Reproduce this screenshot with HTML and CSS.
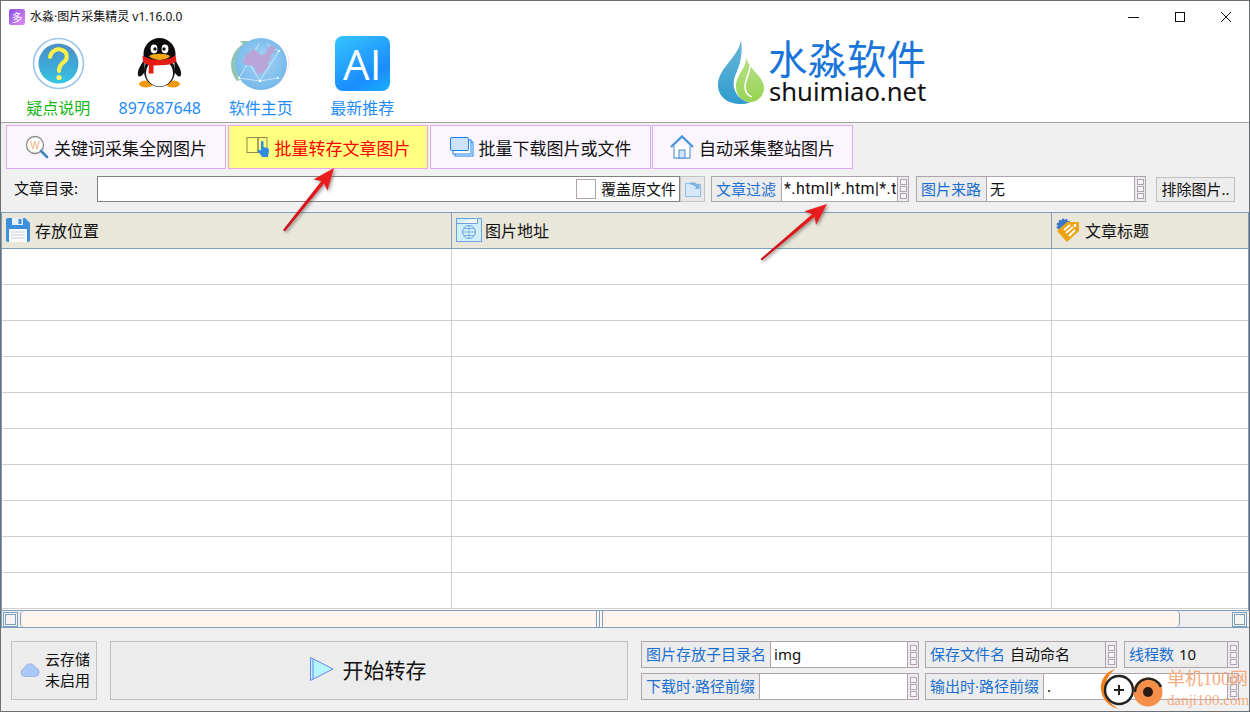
FILE: index.html
```html
<!DOCTYPE html>
<html lang="zh-CN">
<head>
<meta charset="utf-8">
<title>水淼·图片采集精灵</title>
<link rel="stylesheet" href="styles.css">
</head>
<body>
<div class="window">
  <div class="titlebar">
    <span class="app-icon">多</span>
    <span class="app-title">水淼·图片采集精灵 v1.16.0.0</span>
    <div class="win-btns">
      <svg class="win-btn" viewBox="0 0 46 32"><path d="M17 16.500h11" stroke="#111" fill="none"/></svg>
      <svg class="win-btn" viewBox="0 0 46 32"><rect x="18.500" y="11.500" width="9" height="9" stroke="#111" fill="none"/></svg>
      <svg class="win-btn" viewBox="0 0 46 32"><path d="M18 11l10 10M28 11l-10 10" stroke="#111" fill="none"/></svg>
    </div>
  </div>

  <header class="header">
    <div class="shortcut green">
      <svg class="sc-icon" viewBox="0 0 56 56">
        <defs><linearGradient id="orb" x1="0" y1="0" x2="0" y2="1"><stop offset="0" stop-color="#4a8fc4"/><stop offset=".55" stop-color="#3fa8d8"/><stop offset="1" stop-color="#35c6e2"/></linearGradient></defs>
        <circle cx="28.500" cy="27.500" r="25" fill="#fff" stroke="#9cc6ea" stroke-width="1.600"/>
        <circle cx="28.500" cy="27.500" r="20" fill="url(#orb)"/>
        <path d="M20 21c1-6 7-9 12-7 6 2 6 9 2 12-3 2-5 4-5 9" fill="none" stroke="#fff04a" stroke-width="4" stroke-linecap="round"/>
        <circle cx="29" cy="41.500" r="2.600" fill="#fff46a"/>
      </svg>
      <span>疑点说明</span>
    </div>
    <div class="shortcut">
      <svg class="sc-icon" viewBox="0 0 56 56">
        <g transform="translate(6 2)">
          <ellipse cx="8" cy="46" rx="7" ry="3.500" fill="#f29a12"/><ellipse cx="35" cy="46" rx="7" ry="3.500" fill="#f29a12"/>
          <path d="M7 20C3 27 -1 32 0 37c1 3 4 1 6-2zM36 20c4 7 8 12 7 17-1 3-4 1-6-2z" fill="#111"/>
          <ellipse cx="21.500" cy="16" rx="16" ry="16" fill="#0b0b0b"/>
          <ellipse cx="21.500" cy="33" rx="15.500" ry="16" fill="#111"/>
          <ellipse cx="21.500" cy="35" rx="13.500" ry="13.500" fill="#fff"/>
          <ellipse cx="16" cy="11" rx="3.400" ry="4.400" fill="#fff"/><ellipse cx="27" cy="11" rx="3.400" ry="4.400" fill="#fff"/>
          <circle cx="17" cy="11" r="1.700" fill="#111"/><circle cx="26" cy="11" r="1.700" fill="#111"/>
          <path d="M11 18c4-3 17-3 21 0-3 5-17 5-21 0z" fill="#f6a915"/>
          <path d="M4.500 17.500c10 6 24 6 33 0l1 6c-3 2-7 3-11 3.500l-12 .5v8h-5l.5-8.500C8 26 5.500 25 5 24z" fill="#e51d14"/>
        </g>
      </svg>
      <span>897687648</span>
    </div>
    <div class="shortcut">
      <svg class="sc-icon globe" viewBox="0 0 68 56">
        <defs><radialGradient id="gl" cx=".5" cy=".45" r=".6"><stop offset="0" stop-color="#a8d4f5"/><stop offset="1" stop-color="#6fb6ea"/></radialGradient></defs>
        <path d="M10 45C1 34 2 17 16 8l-3-3 10 0-5 8-1-3C7 18 6 33 13 44z" fill="#8fc4ae"/>
        <path d="M55 9c10 11 9 28-3 38l-6 3 8-8 1 2c8-9 9-23 1-34z" fill="#f0a8b8"/>
        <circle cx="34" cy="28" r="26" fill="url(#gl)"/>
        <path d="M12 42l21 3 18-3M12 42L32 8M33 45l19-30M33 45L18 20M52 15L40 8" stroke="#dcecf8" fill="none" stroke-width=".8"/>
        <path d="M19 19l7-6 5 3 3 3 4-1 3-6 4-3 4 3-2 5-4 3 2 3-4 3 0 5-4 4-4 4-4-2-1-5-4-3-5 0-4-3z" fill="#b9a6d9"/>
        <circle cx="51" cy="42" r="1" fill="#fff"/><circle cx="33" cy="45" r="1.200" fill="#fff"/><circle cx="12" cy="42" r="1" fill="#fff"/><circle cx="52" cy="15" r="1" fill="#fff"/>
      </svg>
      <span>软件主页</span>
    </div>
    <div class="shortcut">
      <div class="ai-tile">AI</div>
      <span>最新推荐</span>
    </div>
    <div class="logo">
      <svg class="logo-drop" viewBox="0 0 46 64">
        <defs>
          <linearGradient id="dropb" x1="0" y1="0" x2="0" y2="1"><stop offset="0" stop-color="#6cb8d8"/><stop offset="1" stop-color="#2f9ccd"/></linearGradient>
          <linearGradient id="dropg" x1="0" y1="0" x2="0" y2="1"><stop offset="0" stop-color="#b9e08a"/><stop offset="1" stop-color="#97d352"/></linearGradient>
        </defs>
        <path d="M23 0C20 18 0 28 0 45c0 12 10 19 23 19 3 0 6-.5 9-1.500C20 60 14 50 16 40c2-9 10-19 7-40z" fill="url(#dropb)"/>
        <path d="M28 17c1 11-10 17-10 30 0 8 6 14 13 15 8 1 15-6 15-14 0-12-15-18-18-31z" fill="url(#dropg)"/>
        <path d="M32 26c0 8-5 12-5 21 0 5 3 9 7 10" fill="none" stroke="#fff" stroke-width="1.600"/>
      </svg>
      <div class="logo-text">
        <div class="logo-cn">水淼软件</div>
        <div class="logo-en">shuimiao.net</div>
      </div>
    </div>
  </header>

  <nav class="tabs">
    <div class="tab">
      <svg class="tab-icon" viewBox="0 0 24 24"><circle cx="10" cy="10" r="8.500" fill="#fff" stroke="#8a8a8a" stroke-width="1.300"/><text x="10" y="13.500" text-anchor="middle" class="tab-w">W</text><path d="M16 16l6 6" stroke="#3f86c6" stroke-width="2.600" stroke-linecap="round"/></svg>
      <span>关键词采集全网图片</span>
    </div>
    <div class="tab active">
      <svg class="tab-icon" viewBox="0 0 24 24"><rect x="1" y="2.500" width="11" height="15" fill="none" stroke="#8a8a50"/><rect x="12" y="2.500" width="9" height="15" fill="none" stroke="#8a8a50"/><path d="M15 7c0-1.500 2.500-1.500 2.500 0v5l4 1c1.500.5 1.500 2 1.500 3l-1 6h-6l-4-6c0-1.500 1-2 2-1l1 1z" fill="#2f8be8"/></svg>
      <span>批量转存文章图片</span>
    </div>
    <div class="tab">
      <svg class="tab-icon" viewBox="0 0 24 24"><rect x="5" y="7" width="18" height="14" fill="#fff" stroke="#1a82f0"/><rect x="3" y="5" width="18" height="14" fill="#fff" stroke="#1a82f0"/><rect x=".5" y="2.500" width="18" height="13" rx="1.500" fill="#cfe2fb" stroke="#1a82f0"/></svg>
      <span>批量下载图片或文件</span>
    </div>
    <div class="tab">
      <svg class="tab-icon" viewBox="0 0 24 24"><path d="M4 11v12h16V11" fill="#fff" stroke="#6ea4d4" stroke-width="1.300"/><rect x="9" y="15" width="6" height="8" fill="#cfe4f8" stroke="#4a8fd0"/><path d="M1 12L12 1.500 23 12" fill="none" stroke="#4a96d8" stroke-width="2.400"/></svg>
      <span>自动采集整站图片</span>
    </div>
  </nav>

  <div class="toolbar">
    <span class="tool-label">文章目录:</span>
    <div class="path-input">
      <span class="checkbox"></span>
      <span class="check-label">覆盖原文件</span>
    </div>
    <div class="icon-btn">
      <svg viewBox="0 0 18 18" width="18" height="18"><path d="M1.500 3.500h6v1h9v12h-15z" fill="#d6e8f8" stroke="#8dbde8"/><path d="M4 4c4-3 8-2 10 1l1.500-1.500V9h-5l2-1.500C10 5 7 4 4 4z" fill="#7fb2e4"/></svg>
    </div>
    <div class="field f-filter">
      <span class="f-label">文章过滤</span>
      <div class="f-value white filter-value">*.html|*.htm|*.txt</div>
      <span class="spin"><i></i><i></i><i></i></span>
    </div>
    <div class="field f-source">
      <span class="f-label">图片来路</span>
      <div class="f-value white">无</div>
      <span class="spin"><i></i><i></i><i></i></span>
    </div>
    <div class="plain-btn">排除图片..</div>
  </div>

  <div class="table">
    <div class="t-head">
      <div class="th">
        <svg class="th-icon" viewBox="0 0 24 24"><path d="M0 2a2 2 0 0 1 2-2h17l5 5v17a2 2 0 0 1-2 2H2a2 2 0 0 1-2-2z" fill="#3b8fdd"/><rect x="6" y="0" width="11" height="7" fill="#e8f1fa"/><rect x="12.500" y="1" width="3" height="5" fill="#3b8fdd"/><rect x="3" y="11" width="18" height="13" fill="#fbfbfb"/><path d="M5 14h14M5 17h14M5 20h14" stroke="#c9ced4"/></svg>
        <span>存放位置</span>
      </div>
      <div class="th th-url">
        <svg class="th-icon wide" viewBox="0 0 26 24"><rect x=".5" y=".5" width="25" height="23" fill="#cdf0fa" stroke="#6f9fe0"/><path d="M.5 5.500h21V.5" fill="#f6f6ee" stroke="#6f9fe0"/><circle cx="13" cy="14" r="6.500" fill="none" stroke="#6f9fe0"/><path d="M6.500 14h13M13 7.500v13M8 10.500h10M8 17.500h10" stroke="#6f9fe0" fill="none" stroke-width=".8"/></svg>
        <span>图片地址</span>
      </div>
      <div class="th">
        <svg class="th-icon" viewBox="0 0 24 24"><circle cx="8" cy="8" r="6.500" fill="#3a78c8" stroke="#3a78c8" stroke-width="2" stroke-dasharray="2 1.500"/><path d="M11 4h11a1 1 0 0 1 1 1v8L11 24 1 13z" fill="#eca414"/><path d="M8 12l6-5M10 15l7-6M13 18l6-6" stroke="#fff" stroke-width="1.800"/><circle cx="19" cy="7.500" r="1.400" fill="#fff"/></svg>
        <span>文章标题</span>
      </div>
    </div>
    <div class="t-body">
      <div class="tr"><div></div><div></div><div></div></div>
      <div class="tr"><div></div><div></div><div></div></div>
      <div class="tr"><div></div><div></div><div></div></div>
      <div class="tr"><div></div><div></div><div></div></div>
      <div class="tr"><div></div><div></div><div></div></div>
      <div class="tr"><div></div><div></div><div></div></div>
      <div class="tr"><div></div><div></div><div></div></div>
      <div class="tr"><div></div><div></div><div></div></div>
      <div class="tr"><div></div><div></div><div></div></div>
      <div class="tr"><div></div><div></div><div></div></div>
    </div>
    <div class="hscroll">
      <span class="sb-btn"></span>
      <div class="sb-thumb"><span class="sb-grip"></span></div>
      <span class="sb-btn end"></span>
    </div>
  </div>

  <footer class="bottom">
    <div class="cloud-btn">
      <svg class="cloud" viewBox="0 0 20 14"><path d="M4.500 13.500a4 4 0 0 1-.5-7.800C5 2 8 .5 11 1c2.500.5 4 2 4.500 4a4.300 4.300 0 0 1 0 8.500z" fill="#a9c8f8" stroke="#9db4dc"/></svg>
      <div class="cloud-text"><span>云存储</span><span>未启用</span></div>
    </div>
    <div class="start-btn">
      <svg class="play" viewBox="0 0 24 24"><path d="M.5.500L23 12 .5 23.500z" fill="#b4f6fc" stroke="#6f86ee"/><path d="M3 2v20" stroke="#6f86ee"/></svg>
      <span>开始转存</span>
    </div>
    <div class="fields">
      <div class="field">
        <span class="f-label">图片存放子目录名</span>
        <div class="f-value white">img</div>
        <span class="spin"><i></i><i></i><i></i></span>
      </div>
      <div class="field gray">
        <span class="f-label bare">保存文件名</span>
        <div class="f-value">自动命名</div>
        <span class="spin"><i></i><i></i><i></i></span>
      </div>
      <div class="field gray threads">
        <span class="f-label bare">线程数</span>
        <div class="f-value">10</div>
        <span class="spin"><i></i><i></i><i></i></span>
      </div>
      <div class="field">
        <span class="f-label">下载时·路径前缀</span>
        <div class="f-value white"></div>
        <span class="spin"><i></i><i></i><i></i></span>
      </div>
      <div class="field span2">
        <span class="f-label">输出时·路径前缀</span>
        <div class="f-value white">.</div>
        <span class="spin"><i></i><i></i><i></i></span>
      </div>
    </div>
  </footer>

  <svg class="arrows" viewBox="0 0 1250 712">
    <defs>
      <linearGradient id="ar" x1="0" y1="0" x2="1" y2="0"><stop offset="0" stop-color="#c8141c"/><stop offset="1" stop-color="#f01c20"/></linearGradient>
      <filter id="sh" x="-30%" y="-30%" width="160%" height="160%"><feDropShadow dx="1.500" dy="1.500" stdDeviation="1.500" flood-color="#555" flood-opacity=".6"/></filter>
    </defs>
    <polygon points="334,168 327.400,190.800 324.200,183.500 285,231.500 283,230 321.400,181 313.400,179.600" fill="url(#ar)" filter="url(#sh)"/>
    <polygon points="827,204 816,225 814.500,217 762,260.500 760.500,259 812.100,214.200 804.400,211.300" fill="url(#ar)" filter="url(#sh)"/>
  </svg>

  <div class="watermark">
    <svg class="wm-icon" viewBox="0 0 64 44">
      <path d="M15 2C5 5 0 14 1 23c1 9 8 17 18 19 -8-4-14-10-14-19S9 7 15 2z" fill="#f07f1c"/>
      <circle cx="19" cy="23" r="14" fill="#fff" stroke="#222" stroke-width="2.400"/>
      <path d="M14 23h10M19 18v10" stroke="#222" stroke-width="2"/>
      <circle cx="48" cy="25" r="14.500" fill="#f58e48"/>
      <path d="M35 25a13.500 13.500 0 0 1 26-5" fill="none" stroke="#222" stroke-width="2.400"/>
      <circle cx="48" cy="25" r="5" fill="#2a1a12"/>
    </svg>
    <div class="wm-text">
      <div class="wm-cn">单机100网</div>
      <div class="wm-en">danji100.com</div>
    </div>
  </div>
</div>
</body>
</html>
```
FILE: styles.css
```css
* { box-sizing: border-box; }
html, body { margin: 0; padding: 0; height: 100%; overflow: hidden; }
body {
  font-family: "Noto Sans", "Noto Sans CJK SC", sans-serif;
  font-size: 15px;
  color: #111;
  background: #f0f0f0;
}
.window {
  position: relative;
  width: 1250px;
  height: 712px;
  border: 1px solid #6c7073;
  display: flex;
  flex-direction: column;
  background: #f0f0f0;
  overflow: hidden;
}

/* title bar */
.titlebar {
  height: 31px;
  flex: none;
  display: flex;
  align-items: center;
  background: #fff;
  padding-left: 8px;
}
.app-icon {
  width: 16px;
  height: 16px;
  border-radius: 2px;
  background: linear-gradient(135deg, #8a4fe8, #e08af0);
  color: #fff;
  font-size: 11px;
  line-height: 16px;
  text-align: center;
  font-family: "Noto Sans CJK SC", sans-serif;
}
.app-title { margin-left: 5px; font-size: 12px; line-height: 16px; }
.win-btns { margin-left: auto; display: flex; }
.win-btn { width: 46px; height: 32px; display: block; }

/* header */
.header {
  height: 91px;
  flex: none;
  display: flex;
  background: #fff;
  padding-left: 6px;
  border-bottom: 1px solid #a0a0a0;
}
.shortcut {
  width: 101.500px;
  height: 90px;
  display: flex;
  flex-direction: column;
  align-items: center;
  padding-top: 4px;
  font-size: 16px;
  line-height: 22px;
  color: #1f8cfa;
}
.shortcut:nth-child(1) { width: 102.500px; }
.shortcut:nth-child(2) { width: 100.500px; }
.shortcut.green { color: #12b512; }
.shortcut span { margin-top: auto; margin-bottom: 3px; white-space: nowrap; }
.sc-icon { width: 56px; height: 56px; display: block; }
.sc-icon.globe { width: 68px; }
.ai-tile {
  width: 55px;
  height: 55px;
  border-radius: 8px;
  background: linear-gradient(150deg, #35c4fc 0%, #1a8cff 70%, #18b0f8 100%);
  color: #fff;
  font-family: "Open Sans", sans-serif;
  font-weight: 400;
  font-size: 42px;
  line-height: 55px;
  text-align: center;
}
.logo {
  margin-left: 305px;
  display: flex;
  align-items: flex-start;
  padding-top: 8px;
}
.logo-drop { width: 46px; height: 64px; display: block; }
.logo-text { margin-left: 5px; margin-top: -7px; }
.logo-cn {
  margin-left: -1px;
  font-size: 39.500px;
  line-height: 47px;
  color: #1a75d8;
  font-family: "Noto Sans CJK SC", sans-serif;
  white-space: nowrap;
}
.logo-en {
  font-size: 25.600px;
  line-height: 24px;
  color: #111;
  white-space: nowrap;
}

/* tabs */
.tabs {
  flex: none;
  display: flex;
  height: 47px;
  padding: 2px 0 1px 5px;
  gap: 2px;
}
.tab {
  height: 44px;
  width: 220px;
  display: flex;
  align-items: center;
  justify-content: center;
  gap: 5px;
  background: #fbf5ff;
  border: 1px solid #dcaaf0;
  font-size: 17px;
}
.tab:nth-child(2) { width: 200px; }
.tab:nth-child(3) { width: 221px; margin-right: -1px; }
.tab:nth-child(4) { width: 201px; }
.tab.active { background: #ffff80; color: #f00; border-color: #e8a8e8; }
.tab-icon { width: 24px; height: 24px; flex: none; }
.tab-w { font-size: 10px; fill: #f2b070; font-family: "Liberation Sans", sans-serif; }

/* toolbar */
.toolbar {
  flex: none;
  height: 42px;
  display: flex;
  padding: 6px 0 0 13px;
  align-items: flex-start;
}
.tool-label { width: 83px; line-height: 25px; white-space: nowrap; }
.path-input {
  width: 583px;
  height: 26px;
  background: #fff;
  border: 1px solid #808080;
  display: flex;
  align-items: center;
  justify-content: flex-end;
  padding-right: 3px;
}
.checkbox {
  width: 20px;
  height: 20px;
  border: 1px solid #b0a3b0;
  background: #fff;
}
.check-label { margin: 0 0 2px 5px; white-space: nowrap; }
.icon-btn {
  width: 25px;
  height: 26px;
  background: #e8e8e8;
  border: 1px solid #c4c4c4;
  display: flex;
  align-items: center;
  justify-content: center;
}
.field {
  height: 26px;
  display: flex;
  align-items: stretch;
  border: 1px solid #b0a3b0;
  background: #fff;
  min-width: 0;
}
.f-filter { width: 198px; margin-left: 6px; }
.f-source { width: 230px; margin-left: 7px; }
.f-label {
  flex: none;
  padding: 0 4px;
  color: #1a6fd0;
  background: #ececec;
  border-right: 1px solid #b0a3b0;
  line-height: 24px;
  white-space: nowrap;
}
.toolbar .f-label { padding-right: 5px; }
.f-label.bare { border-right: 0; }
.f-value {
  flex: 1;
  min-width: 0;
  padding-left: 3px;
  line-height: 24px;
  white-space: nowrap;
  overflow: hidden;
}
.f-value.white { background: #fff; }
.filter-value { font-family: Roboto, sans-serif; font-size: 16px; letter-spacing: .4px; padding-left: 2px; }
.spin {
  flex: none;
  width: 11px;
  display: flex;
  flex-direction: column;
  align-items: center;
  justify-content: center;
  gap: 1px;
  background: #ececec;
  border-left: 1px solid #b0a3b0;
}
.spin i {
  display: block;
  width: 7px;
  height: 6px;
  background: #f4f4f4;
  border: 1px solid #b0a3b0;
}
.field.gray { background: #ececec; }
.plain-btn {
  width: 79px;
  height: 25px;
  margin-left: 10px;
  margin-top: 1px;
  background: #ececec;
  border: 1px solid #c0c0c0;
  line-height: 23px;
  text-align: center;
  white-space: nowrap;
}

/* table */
.table {
  flex: none;
  height: 416px;
  display: flex;
  flex-direction: column;
}
.t-head {
  flex: none;
  height: 37px;
  display: grid;
  grid-template-columns: 450px 600px 1fr;
  background: #e9e7da;
  border: 1px solid #7d9ebd;
}
.th {
  display: flex;
  align-items: center;
  padding: 0 0 2px 4px;
  gap: 5px;
  border-right: 1px solid #7d9ebd;
  font-size: 16px;
}
.th-url { gap: 3px; }
.th:last-child { border-right: 0; }
.th-icon { width: 24px; height: 24px; flex: none; }
.th-icon.wide { width: 26px; }
.t-body {
  flex: none;
  height: 361px;
  background: #fff;
  border-left: 1px solid #7d9ebd;
  border-right: 1px solid #7d9ebd;
}
.tr {
  height: 36px;
  display: grid;
  grid-template-columns: 450px 600px 1fr;
  border-bottom: 1px solid #d0d0d0;
}
.tr > div { border-right: 1px solid #d0d0d0; }
.tr > div:last-child { border-right: 0; }
.hscroll {
  flex: none;
  height: 18px;
  display: flex;
  align-items: center;
  padding: 0 2px 0 1px;
  background: #efefef;
  border-top: 1px solid #7d9ebd;
  border-bottom: 1px solid #7d9ebd;
  border-left: 1px solid #7d9ebd;
}
.sb-btn {
  width: 15px;
  height: 15px;
  flex: none;
  border: 1px solid #7d9ebd;
  background: #f4f4f4;
  box-shadow: inset 0 0 0 1px #f4f4f4, inset 0 0 0 2px #7d9ebd;
}
.sb-btn.end { margin-left: auto; }
.sb-thumb {
  width: 1160px;
  height: 16px;
  margin-left: 2px;
  background: #fff4ee;
  border-left: 1px solid #7d9ebd;
  border-right: 1px solid #7d9ebd;
  border-radius: 4px;
  display: flex;
  justify-content: center;
  padding-left: 1px;
}
.sb-grip {
  width: 9px;
  height: 16px;
  background: repeating-linear-gradient(90deg, #7d9ebd 0 1px, #fff4ee 1px 3px);
}

/* bottom */
.bottom {
  flex: 1;
  display: flex;
  align-items: flex-start;
  padding: 13px 0 0 10px;
}
.cloud-btn {
  width: 86px;
  height: 59px;
  flex: none;
  display: flex;
  align-items: center;
  padding: 0 0 2px 8px;
  background: #ececec;
  border: 1px solid #c0c0c0;
}
.cloud { width: 20px; height: 14px; flex: none; }
.cloud-text {
  margin-left: 5px;
  display: flex;
  flex-direction: column;
  line-height: 21px;
  white-space: nowrap;
}
.start-btn {
  width: 518px;
  height: 59px;
  flex: none;
  margin-left: 13px;
  display: flex;
  align-items: center;
  justify-content: center;
  gap: 9px;
  background: #ececec;
  border: 1px solid #c0c0c0;
  font-size: 21px;
  padding: 0 2px 3px 0;
}
.play { width: 24px; height: 24px; flex: none; }
.fields {
  flex: none;
  margin-left: 13px;
  display: grid;
  grid-template-columns: 278px 192px 116px;
  grid-auto-rows: 27px;
  column-gap: 6px;
  row-gap: 5px;
}
.fields .field { height: 27px; }
.fields .f-label { line-height: 25px; }
.fields .f-value { line-height: 25px; }
.fields .gray .f-label { padding-right: 0; }
.fields .gray .f-value { padding-left: 5px; }
.fields .threads { margin-left: 1px; }
.span2 { grid-column: span 2; }

/* overlays */
.arrows {
  position: absolute;
  left: -1px;
  top: -1px;
  width: 1250px;
  height: 712px;
  pointer-events: none;
}
.watermark {
  position: absolute;
  left: 1099px;
  top: 666px;
  display: flex;
  pointer-events: none;
}
.wm-icon { width: 64px; height: 44px; flex: none; }
.wm-text { margin-left: 3px; color: #f2ac80; white-space: nowrap; }
.wm-cn { font-size: 18px; line-height: 24px; font-family: "Liberation Serif", "Noto Sans CJK SC", serif; }
.wm-en { font-size: 15px; line-height: 18px; font-family: "Liberation Serif", serif; }
```
